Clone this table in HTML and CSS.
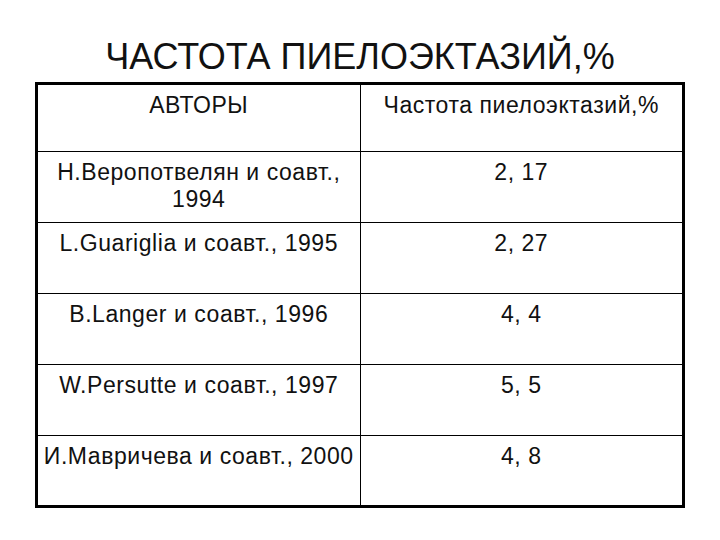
FILE: index.html
```html
<!DOCTYPE html>
<html lang="ru">
<head>
<meta charset="utf-8">
<link rel="stylesheet" href="styles.css">
</head>
<body>
<div class="slide">
  <h1 class="title">ЧАСТОТА ПИЕЛОЭКТАЗИЙ,%</h1>
  <table class="data">
    <tr class="head">
      <td>АВТОРЫ</td>
      <td>Частота пиелоэктазий,%</td>
    </tr>
    <tr>
      <td>Н.Веропотвелян и соавт.,<br>1994</td>
      <td>2, 17</td>
    </tr>
    <tr>
      <td>L.Guariglia и соавт., 1995</td>
      <td>2, 27</td>
    </tr>
    <tr>
      <td>B.Langer и соавт., 1996</td>
      <td>4, 4</td>
    </tr>
    <tr>
      <td>W.Persutte и соавт., 1997</td>
      <td>5, 5</td>
    </tr>
    <tr>
      <td>И.Мавричева и соавт., 2000</td>
      <td>4, 8</td>
    </tr>
  </table>
</div>
</body>
</html>
```

FILE: styles.css
```css
html, body {
  margin: 0;
  padding: 0;
  background: #ffffff;
}

.slide {
  width: 720px;
  height: 540px;
  overflow: hidden;
  font-family: "Liberation Sans", Arial, sans-serif;
  color: #111111;
}

.title {
  margin: 37px 0 0 0;
  font-size: 36px;
  line-height: 40px;
  font-weight: normal;
  text-align: center;
}

.data {
  margin: 5px 0 0 35px;
  width: 650px;
  border-collapse: collapse;
  table-layout: fixed;
  border: 3px solid #000000;
}

.data td {
  width: 50%;
  border: 1px solid #000000;
  padding: 7px 0 0 0;
  vertical-align: top;
  text-align: center;
  font-size: 23px;
  line-height: 27px;
  letter-spacing: 0.55px;
  box-sizing: border-box;
}

.data tr {
  height: 71px;
}

.data tr.head {
  height: 68px;
}
```
